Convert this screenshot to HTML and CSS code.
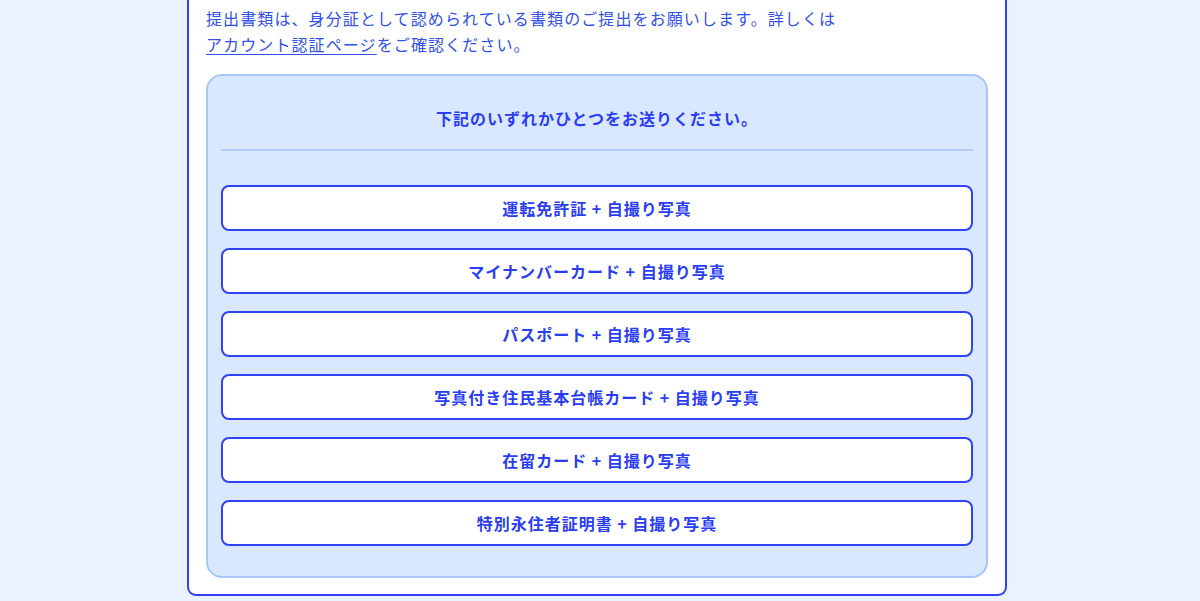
FILE: index.html
```html
<!DOCTYPE html>
<html lang="ja">
<head>
<meta charset="utf-8">
<link rel="stylesheet" href="styles.css">
</head>
<body>
<div class="page">
  <div class="card">
    <p class="intro">提出書類は、身分証として認められている書類のご提出をお願いします。詳しくは<br><a href="#" class="link">アカウント認証ページ</a>をご確認ください。</p>
    <div class="box">
      <div class="box-title">下記のいずれかひとつをお送りください。</div>
      <div class="divider"></div>
      <div class="options">
        <button class="option">運転免許証 + 自撮り写真</button>
        <button class="option">マイナンバーカード + 自撮り写真</button>
        <button class="option">パスポート + 自撮り写真</button>
        <button class="option">写真付き住民基本台帳カード + 自撮り写真</button>
        <button class="option">在留カード + 自撮り写真</button>
        <button class="option">特別永住者証明書 + 自撮り写真</button>
      </div>
    </div>
  </div>
</div>
</body>
</html>
```
FILE: styles.css
```css
html, body {
  margin: 0;
  padding: 0;
  background: #e9f2fe;
  height: 601px;
  overflow: hidden;
}
body {
  font-family: "Noto Sans CJK JP", "Noto Sans", sans-serif;
}
.page {
  display: flex;
  justify-content: center;
  padding-right: 6px;
}
.card {
  width: 782px;
  background: #fff;
  border: 2px solid #2f43f4;
  border-top: none;
  border-radius: 0 0 9px 9px;
  padding: 5px 17px 16px 17px;
}
.intro {
  margin: 0;
  font-size: 16px;
  letter-spacing: 1.1px;
  line-height: 26px;
  color: #3350ea;
}
.link {
  color: #3350ea;
  text-decoration: underline;
  text-underline-offset: 3px;
}
.box {
  margin-top: 17px;
  background: #d9e8fe;
  border: 2px solid #a6c6fb;
  border-radius: 16px;
  padding: 0 13px 30px 13px;
}
.box-title {
  text-align: center;
  font-weight: bold;
  font-size: 16px;
  letter-spacing: 1px;
  line-height: 26px;
  color: #2a3df4;
  padding: 29px 0 18px;
}
.divider {
  height: 2px;
  background: #b4cffa;
}
.options {
  display: flex;
  flex-direction: column;
  gap: 17px;
  margin-top: 34px;
}
.option {
  display: block;
  width: 100%;
  height: 46px;
  background: #fff;
  border: 2px solid #2f43f4;
  border-radius: 8px;
  font-family: inherit;
  font-weight: bold;
  font-size: 16px;
  letter-spacing: 1px;
  line-height: 26px;
  color: #2a3df4;
  text-align: center;
  padding: 0;
}
```
